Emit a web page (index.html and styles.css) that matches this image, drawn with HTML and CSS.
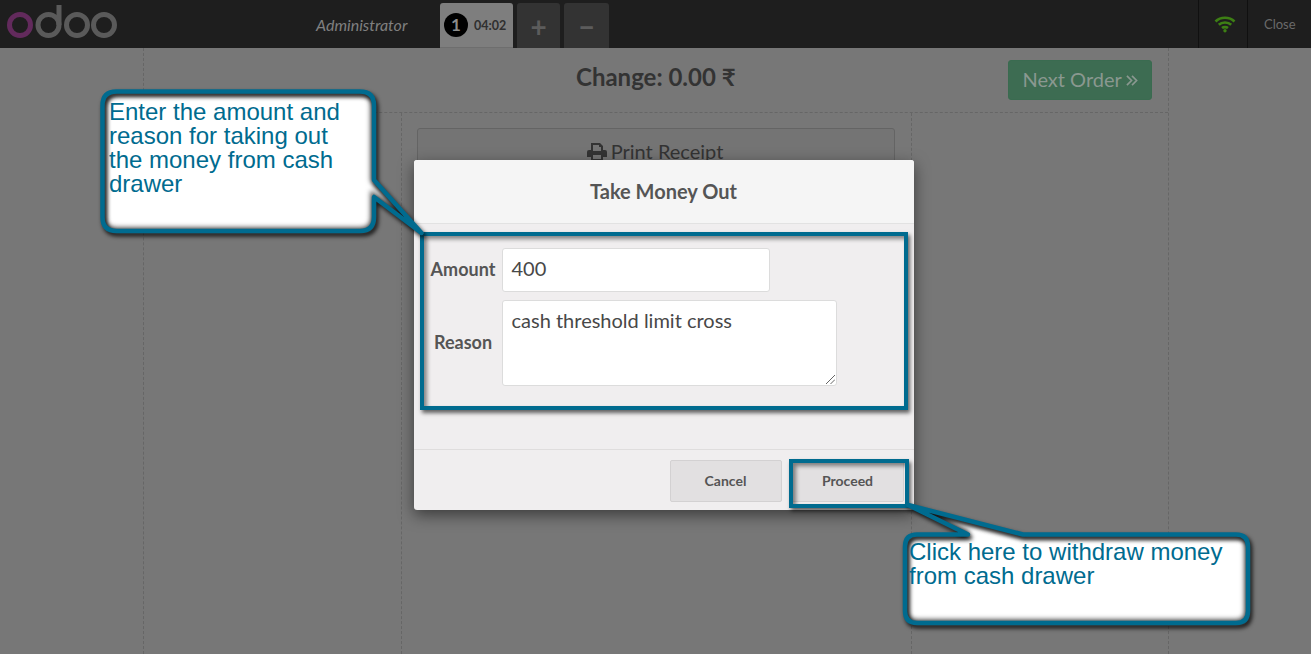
FILE: index.html
```html
<!DOCTYPE html>
<html lang="en">
<head>
    <meta charset="UTF-8">
    <meta name="viewport" content="width=device-width, initial-scale=1.0">
    <title>Take Money Out</title>
    <link rel="stylesheet" href="styles.css">
</head>
<body>
    <header class="topbar">
        <svg class="logo" width="125" height="48" viewBox="0 0 125 48">
            <circle class="logo-o purple" cx="20" cy="25" r="10.5"/>
            <circle class="logo-o" cx="48.5" cy="25" r="10.5"/>
            <path class="logo-o" d="M59 25V5"/>
            <circle class="logo-o" cx="77" cy="25" r="10.5"/>
            <circle class="logo-o" cx="104" cy="25" r="10.5"/>
        </svg>
        <span class="username">Administrator</span>
        <div class="tabs">
            <div class="tab active"><span class="tab-num">1</span><span class="tab-time">04:02</span></div>
            <div class="tab tab-btn plus">+</div>
            <div class="tab tab-btn minus">&minus;</div>
        </div>
        <div class="status">
            <svg width="22" height="18" viewBox="0 0 22 18">
                <path class="wifi" d="M1.500 6.500C6.500 1.500 15.500 1.500 20.500 6.500"/>
                <path class="wifi" d="M4.800 9.800C8 6.700 14 6.700 17.200 9.800"/>
                <path class="wifi" d="M8 13C9.500 11.800 12.500 11.800 14 13"/>
                <circle class="wifi-dot" cx="11" cy="15.800" r="1.700"/>
            </svg>
        </div>
        <div class="close-btn">Close</div>
    </header>

    <main class="screen">
        <div class="top-row">
            <h1 class="change">Change: 0.00 ₹</h1>
            <button class="next-order">Next Order
                <svg width="12" height="13" viewBox="0 0 13 13"><path d="M1 1.500L6 6.500L1 11.500M6.500 1.500L11.500 6.500L6.500 11.500"/></svg>
            </button>
        </div>
        <div class="columns">
            <div class="col-left"></div>
            <div class="col-center">
                <button class="print-btn"><svg width="20" height="18" viewBox="0 0 20 18"><path d="M4 0H13L16 3V7H18Q20 7 20 9V14H16V18H4V14H0V9Q0 7 2 7H4ZM6 2V8H14V4H12V2ZM6 12V16H14V12Z" fill-rule="evenodd"/></svg><span class="print-label">Print Receipt</span></button>
            </div>
            <div class="col-right"></div>
        </div>
    </main>

    <div class="modal">
        <div class="modal-title">Take Money Out</div>
        <div class="modal-body">
            <div class="field">
                <label class="field-label">Amount</label>
                <div class="input amount">400</div>
            </div>
            <div class="field">
                <label class="field-label">Reason</label>
                <div class="input reason">cash threshold limit cross
                    <svg class="grip" width="9" height="9" viewBox="0 0 9 9"><path d="M0 9L9 0M4.500 9L9 4.500"/></svg>
                </div>
            </div>
        </div>
        <div class="modal-footer">
            <button class="modal-btn">Cancel</button>
            <button class="modal-btn">Proceed</button>
        </div>
    </div>

    <div class="highlight hl-form"></div>
    <div class="highlight hl-proceed"></div>

    <svg class="callouts" width="1311" height="654" viewBox="0 0 1311 654">
        <defs>
            <clipPath id="clipA"><path d="M116.500 91.500H360Q374 91.500 374 105.500V180L421.500 233L374 197V217Q374 231 360 231H116.500Q102.500 231 102.500 217V105.500Q102.500 91.500 116.500 91.500Z"/></clipPath>
            <clipPath id="clipB"><path d="M917 534.500H968L908 505L1023 534.500H1236Q1248 534.500 1248 546.500V611Q1248 623 1236 623H917Q905 623 905 611V546.500Q905 534.500 917 534.500Z"/></clipPath>
        </defs>
        <path class="bubble-fill" d="M116.500 91.500H360Q374 91.500 374 105.500V180L421.500 233L374 197V217Q374 231 360 231H116.500Q102.500 231 102.500 217V105.500Q102.500 91.500 116.500 91.500Z"/>
        <g clip-path="url(#clipA)"><path class="bubble-glow" d="M116.500 91.500H360Q374 91.500 374 105.500V180L421.500 233L374 197V217Q374 231 360 231H116.500Q102.500 231 102.500 217V105.500Q102.500 91.500 116.500 91.500Z"/></g>
        <path class="bubble-line" d="M116.500 91.500H360Q374 91.500 374 105.500V180L421.500 233L374 197V217Q374 231 360 231H116.500Q102.500 231 102.500 217V105.500Q102.500 91.500 116.500 91.500Z"/>

        <path class="bubble-fill" d="M917 534.500H968L908 505L1023 534.500H1236Q1248 534.500 1248 546.500V611Q1248 623 1236 623H917Q905 623 905 611V546.500Q905 534.500 917 534.500Z"/>
        <g clip-path="url(#clipB)"><path class="bubble-glow" d="M917 534.500H968L908 505L1023 534.500H1236Q1248 534.500 1248 546.500V611Q1248 623 1236 623H917Q905 623 905 611V546.500Q905 534.500 917 534.500Z"/></g>
        <path class="bubble-line" d="M917 534.500H968L908 505L1023 534.500H1236Q1248 534.500 1248 546.500V611Q1248 623 1236 623H917Q905 623 905 611V546.500Q905 534.500 917 534.500Z"/>
    </svg>
    <p class="note note-form">Enter the amount and<br>reason for taking out<br>the money from cash<br>drawer</p>
    <p class="note note-proceed">Click here to withdraw money<br>from cash drawer</p>
</body>
</html>
```

FILE: styles.css
```css
* {
    box-sizing: border-box;
}

html, body {
    height: 100%;
}

body {
    margin: 0;
    height: 654px;
    overflow: hidden;
    position: relative;
    background-color: #777777;
    font-family: Lato, "Open Sans", sans-serif;
    display: flex;
    flex-direction: column;
}

/* top bar */
.topbar {
    height: 48px;
    flex: none;
    background-color: #1e1e1e;
    display: flex;
    align-items: stretch;
}

.logo {
    flex: none;
}

.logo-o {
    fill: none;
    stroke: #5a5a5a;
    stroke-width: 5;
}

.logo-o.purple {
    stroke: #622a5c;
}

.username {
    margin-left: 191px;
    width: 124px;
    align-self: center;
    font-size: 16px;
    font-style: italic;
    color: #808080;
    white-space: nowrap;
}

.tabs {
    display: flex;
    gap: 4px;
    padding-top: 3px;
    flex: 1;
}

.tab {
    border-radius: 3px 3px 0 0;
    background-color: #333333;
    display: flex;
    align-items: center;
    justify-content: center;
}

.tab.active {
    width: 73px;
    background-color: #7e7e7e;
    border-bottom: 1px solid #6e6e6e;
    justify-content: flex-start;
    padding-left: 4px;
    gap: 6px;
}

.tab-num {
    width: 24px;
    height: 24px;
    border-radius: 50%;
    background-color: #000000;
    color: #8c8c8c;
    font-size: 17px;
    font-weight: bold;
    text-align: center;
    line-height: 24px;
}

.tab-time {
    font-size: 12.500px;
    font-weight: bold;
    color: #2f2f2f;
}

.tab-btn {
    color: #5c5c5c;
    font-size: 28px;
    font-weight: bold;
    line-height: 1;
}

.plus {
    width: 43px;
}

.minus {
    width: 45px;
}

.status {
    width: 50px;
    border-left: 1px solid #101010;
    border-right: 1px solid #101010;
    padding-left: 4px;
    display: flex;
    align-items: center;
    justify-content: center;
}

.wifi {
    fill: none;
    stroke: #3d7f14;
    stroke-width: 2.600;
}

.wifi-dot {
    fill: #3d7f14;
}

.close-btn {
    width: 63px;
    padding-left: 16px;
    font-size: 13px;
    line-height: 48px;
    color: #6a6a6a;
}

/* pos screen behind the popup */
.screen {
    width: 1026px;
    margin-left: 143px;
    flex: 1;
    border-left: 1px dashed #666666;
    border-right: 1px dashed #666666;
    display: flex;
    flex-direction: column;
}

.top-row {
    height: 65px;
    flex: none;
    border-bottom: 1px dashed #666666;
    position: relative;
    display: flex;
    justify-content: flex-end;
    padding: 12px 16px 0 0;
}

.change {
    margin: 0;
    position: absolute;
    left: 432px;
    top: 13px;
    font-size: 24px;
    line-height: 32px;
    font-weight: bold;
    color: #333333;
    white-space: nowrap;
}

.next-order {
    width: 144px;
    height: 40px;
    border: 1px solid #3a6b50;
    border-radius: 3px;
    background-color: #3d6c52;
    color: #8a9890;
    font-family: inherit;
    font-size: 20px;
    padding: 0 0 2px;
}

.next-order svg {
    fill: none;
    stroke: #8a9890;
    stroke-width: 1.800;
    margin-left: -1px;
}

.columns {
    flex: 1;
    display: flex;
}

.col-left {
    width: 257px;
}

.col-center {
    width: 511px;
    border-left: 1px dashed #666666;
    border-right: 1px dashed #666666;
    padding: 15px;
}

.print-btn {
    width: 478px;
    height: 60px;
    border: 1px solid #646464;
    border-radius: 3px;
    background-color: #747474;
    color: #333333;
    font-family: inherit;
    font-size: 20px;
    padding: 0 2px 14px 0;
}

.print-btn svg {
    fill: #333333;
    vertical-align: -2px;
}

.print-label {
    margin-left: 4px;
}

/* popup */
.modal {
    position: absolute;
    left: 414px;
    top: 160px;
    width: 500px;
    height: 350px;
    border-radius: 3px;
    background-color: #f0eeef;
    box-shadow: 0 5px 15px rgba(0, 0, 0, 0.5);
    color: #555555;
    display: flex;
    flex-direction: column;
}

.modal-title {
    height: 64px;
    flex: none;
    background-color: #f5f5f5;
    border-bottom: 1px solid #e2e2e2;
    border-radius: 3px 3px 0 0;
    font-size: 20px;
    font-weight: bold;
    text-align: center;
    line-height: 63px;
    padding-right: 1px;
}

.modal-body {
    height: 225px;
    flex: none;
    padding-top: 24px;
    display: flex;
    flex-direction: column;
    gap: 8px;
}

.field {
    display: flex;
    align-items: center;
}

.field-label {
    width: 88px;
    padding: 0 0 2px 10px;
    text-align: center;
    font-size: 18px;
    font-weight: bold;
}

.input {
    background-color: #ffffff;
    border: 1px solid #dcdcdc;
    border-radius: 3px;
    font-size: 20px;
    color: #484848;
    padding: 7px 8.500px;
    line-height: 25px;
    position: relative;
}

.amount {
    width: 268px;
    height: 44px;
}

.reason {
    width: 335px;
    height: 86px;
}

.grip {
    position: absolute;
    right: 1px;
    bottom: 1px;
    fill: none;
    stroke: #666666;
    stroke-width: 1;
}

.modal-footer {
    flex: 1;
    border-top: 1px solid #dfdddd;
    padding: 10px 10px 0 0;
    display: flex;
    justify-content: flex-end;
    gap: 10px;
}

.modal-btn {
    width: 112px;
    height: 42px;
    background-color: #e2e0e1;
    border: 1px solid #d3d1d2;
    border-radius: 2px;
    color: #555555;
    font-family: inherit;
    font-size: 14px;
    font-weight: bold;
    padding: 0 1px 2px 0;
}

/* annotations on top of the screenshot */
.highlight {
    position: absolute;
    border: 4px solid #006b8f;
    box-shadow: 2px 3px 4px rgba(0, 0, 0, 0.6), inset 3px 3px 4px rgba(0, 0, 0, 0.45);
}

.hl-form {
    left: 420px;
    top: 232px;
    width: 488px;
    height: 178px;
}

.hl-proceed {
    left: 789px;
    top: 459px;
    width: 120px;
    height: 49px;
}

.callouts {
    position: absolute;
    left: 0;
    top: 0;
}

.bubble-fill {
    fill: #ffffff;
}

.bubble-glow {
    fill: none;
    stroke: #4a4a4a;
    stroke-width: 7;
    filter: blur(2.500px);
}

.bubble-line {
    fill: none;
    stroke: #006b8f;
    stroke-width: 4.500;
    stroke-linejoin: round;
    filter: drop-shadow(2px 3px 2px rgba(0, 0, 0, 0.85));
}

.note {
    position: absolute;
    margin: 0;
    font-family: "Liberation Sans", Arial, sans-serif;
    font-size: 24px;
    line-height: 24px;
    color: #006b8f;
    white-space: nowrap;
}

.note-form {
    left: 109px;
    top: 100px;
}

.note-proceed {
    left: 909px;
    top: 540px;
}
```
